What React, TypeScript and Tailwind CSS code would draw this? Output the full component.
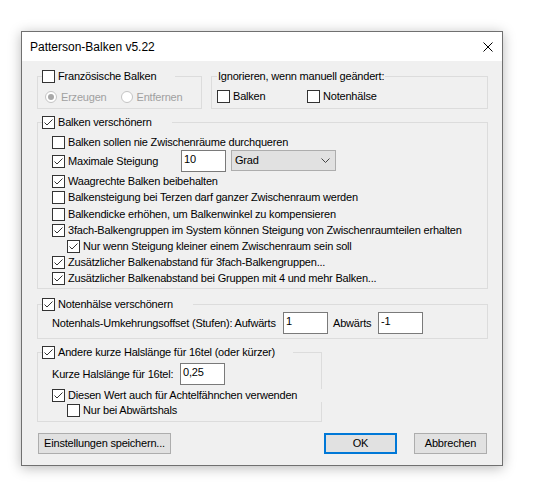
import React from "react";
import clsx from "clsx";

// Checkbox-Kästchen im Windows-10-Stil
function Box({ checked }: { checked?: boolean }) {
  return (
    <span className="flex h-[13px] w-[13px] shrink-0 items-center justify-center border border-[#333333] bg-white">
      {checked && (
        <svg width="11" height="11" viewBox="0 0 11 11">
          <path d="M1.5 5.5 L4 8 L9.5 2.5" fill="none" stroke="#333333" strokeWidth="1" />
        </svg>
      )}
    </span>
  );
}

// Höhe wird immer von außen gesetzt (h-[13px] / h-[16px] / h-[22px])
function Check({ label, checked, className }: { label: string; checked?: boolean; className: string }) {
  return (
    <label className={clsx("flex items-center gap-[3px] whitespace-nowrap", className)}>
      <Box checked={checked} />
      <span>{label}</span>
    </label>
  );
}

function Radio({ label, selected }: { label: string; selected?: boolean }) {
  return (
    <label className="flex h-[12px] items-center gap-[4px] whitespace-nowrap text-[#a0a0a0]">
      <span className="flex h-[12px] w-[12px] items-center justify-center rounded-full border border-[#c4c4c4] bg-white">
        {selected && <span className="h-[6px] w-[6px] rounded-full bg-[#a8a8a8]" />}
      </span>
      <span>{label}</span>
    </label>
  );
}

function TextBox({ value, className }: { value: string; className?: string }) {
  return (
    <div className={clsx("flex h-[22px] items-center border border-[#7a7a7a] bg-white pb-[3px] pl-[2px]", className)}>
      {value}
    </div>
  );
}

function Button({ label, primary, className }: { label: string; primary?: boolean; className?: string }) {
  return (
    <button
      className={clsx(
        "flex h-[21px] items-center justify-center bg-[#e1e1e1]",
        primary ? "border-2 border-[#0078d7]" : "border border-[#adadad]",
        className
      )}
    >
      {label}
    </button>
  );
}

export default function App() {
  return (
    <div className="h-[504px] w-[548px] bg-white pl-[21px] pt-[31px] font-['Liberation_Sans',Arial,sans-serif] text-[11px] tracking-[-0.2px] text-black">
      <div className="flex h-[435px] w-[482px] flex-col border border-[#707070] bg-[#f0f0f0] shadow-[0_2px_12px_rgba(0,0,0,0.28)]">
        {/* Titelleiste */}
        <div className="flex h-[29px] shrink-0 items-center justify-between bg-white pl-[8px] pr-[9px] text-[12px] tracking-normal">
          <span>Patterson-Balken v5.22</span>
          <svg width="10" height="10" viewBox="0 0 10 10">
            <path d="M0.5 0.5 L9.5 9.5 M9.5 0.5 L0.5 9.5" stroke="#000" strokeWidth="1" />
          </svg>
        </div>

        <div className="flex flex-col pl-[15px] pt-[9px]">
          {/* obere Zeile */}
          <div className="flex w-[451px] gap-[9px]">
            <fieldset className="w-[165px] min-w-0 border border-[#dcdcdc]">
              <legend className="ml-[4px] w-[133px]">
                <Check label="Französische Balken" className="h-[13px]" />
              </legend>
              <div className="flex gap-[14px] pb-[5px] pl-[7px] pt-[8px]">
                <Radio label="Erzeugen" selected />
                <Radio label="Entfernen" />
              </div>
            </fieldset>
            <fieldset className="w-[277px] min-w-0 border border-[#dcdcdc]">
              <legend className="ml-[5px] w-[168px]">
                <span className="flex h-[13px] items-center pl-[1px]">Ignorieren, wenn manuell geändert:</span>
              </legend>
              <div className="flex pb-[5px] pl-[5px] pt-[7px]">
                <Check label="Balken" className="h-[13px] w-[90px]" />
                <Check label="Notenhälse" className="h-[13px]" />
              </div>
            </fieldset>
          </div>

          {/* Balken verschönern */}
          <fieldset className="mt-[7px] w-[451px] min-w-0 border border-[#dcdcdc]">
            <legend className="ml-[4px] w-[130px]">
              <Check label="Balken verschönern" checked className="h-[13px]" />
            </legend>
            <div className="flex flex-col pb-[2px] pl-[14px] pt-[5px]">
              <Check label="Balken sollen nie Zwischenräume durchqueren" className="h-[16px]" />
              <div className="flex h-[22px] items-start">
                <Check label="Maximale Steigung" checked className="h-[22px] w-[129px]" />
                <TextBox value="10" className="w-[45px]" />
                <div className="ml-[5px] flex h-[21px] w-[105px] items-center justify-between border border-[#adadad] bg-[#e1e1e1] pl-[3px] pr-[5px]">
                  <span>Grad</span>
                  <svg width="9" height="5" viewBox="0 0 9 5">
                    <path d="M0.5 0.5 L4.5 4.5 L8.5 0.5" fill="none" stroke="#444" strokeWidth="1" />
                  </svg>
                </div>
              </div>
              <Check label="Waagrechte Balken beibehalten" checked className="mt-[1px] h-[16px]" />
              <Check label="Balkensteigung bei Terzen darf ganzer Zwischenraum werden" className="h-[16px]" />
              <Check label="Balkendicke erhöhen, um Balkenwinkel zu kompensieren" className="mt-[1px] h-[16px]" />
              <Check label="3fach-Balkengruppen im System können Steigung von Zwischenraumteilen erhalten" checked className="h-[16px]" />
              <Check label="Nur wenn Steigung kleiner einem Zwischenraum sein soll" checked className="ml-[15px] h-[16px]" />
              <Check label="Zusätzlicher Balkenabstand für 3fach-Balkengruppen..." checked className="h-[16px]" />
              <Check label="Zusätzlicher Balkenabstand bei Gruppen mit 4 und mehr Balken..." checked className="h-[16px]" />
            </div>
          </fieldset>

          {/* Notenhälse verschönern */}
          <fieldset className="mt-[9px] w-[451px] min-w-0 border border-[#dcdcdc]">
            <legend className="ml-[4px] w-[151px]">
              <Check label="Notenhälse verschönern" checked className="h-[13px]" />
            </legend>
            <div className="flex items-center pb-[4px] pl-[14px] pt-[1px]">
              <span className="w-[231px] whitespace-nowrap">Notenhals-Umkehrungsoffset (Stufen): Aufwärts</span>
              <TextBox value="1" className="w-[45px]" />
              <span className="ml-[5px] w-[45px]">Abwärts</span>
              <TextBox value="-1" className="w-[45px]" />
            </div>
          </fieldset>

          {/* Kurze Halslänge – die Checkbox-Zeile ragt über den rechten Rahmen hinaus */}
          <fieldset className="mt-[7px] w-[285px] min-w-0 border border-[#dcdcdc]">
            <legend className="ml-[4px] w-[251px]">
              <Check label="Andere kurze Halslänge für 16tel (oder kürzer)" checked className="h-[13px]" />
            </legend>
            <div className="flex flex-col pb-[4px] pl-[14px] pt-[4px]">
              <div className="flex items-center">
                <span className="w-[128px] whitespace-nowrap">Kurze Halslänge für 16tel:</span>
                <TextBox value="0,25" className="w-[45px]" />
              </div>
              <Check
                label="Diesen Wert auch für Achtelfähnchen verwenden"
                checked
                className="mt-[4px] h-[13px] w-[278px] shrink-0 bg-[#f0f0f0]"
              />
              <Check label="Nur bei Abwärtshals" className="ml-[15px] mt-[2px] h-[13px]" />
            </div>
          </fieldset>

          {/* Schaltflächen */}
          <div className="mr-[15px] mt-[11px] flex">
            <Button label="Einstellungen speichern..." className="ml-[1px] w-[133px]" />
            <Button label="OK" primary className="ml-auto w-[73px]" />
            <Button label="Abbrechen" className="ml-[17px] w-[73px]" />
          </div>
        </div>
      </div>
    </div>
  );
}
